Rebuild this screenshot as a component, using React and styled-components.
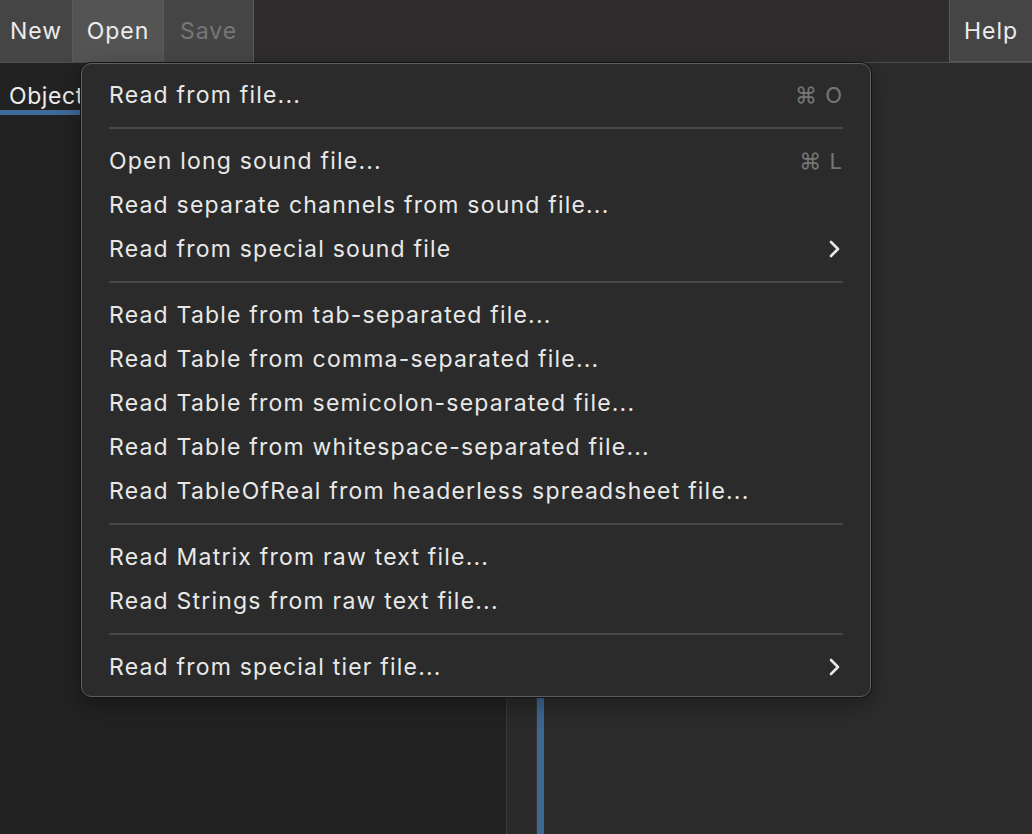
import React from "react";
import styled, { createGlobalStyle } from "styled-components";

const Global = createGlobalStyle`
  html, body { margin: 0; padding: 0; background: #2d2c2c; }
  body {
    font-family: Inter, "Noto Sans", "Liberation Sans", sans-serif;
    -webkit-font-smoothing: antialiased;
  }
`;

const Page = styled.div`
  position: relative;
  width: 1032px;
  height: 834px;
  overflow: hidden;
  display: flex;
  flex-direction: column;
  background: #2d2c2c;
`;

const Toolbar = styled.div`
  display: flex;
  height: 62px;
  border-bottom: 1px solid #4e4e4e;
  background: #2e2c2d;
`;

const ToolButton = styled.div`
  display: flex;
  align-items: center;
  justify-content: center;
  padding: 0 ${(p) => p.pad || 12}px;
  min-width: ${(p) => p.w}px;
  box-sizing: border-box;
  background: ${(p) => (p.active ? "#555454" : "#464545")};
  color: ${(p) => (p.disabled ? "#767676" : "#ececec")};
  font-size: 23px;
  letter-spacing: 1px;
  border-right: 1px solid #5b5b5b;
  ${(p) => p.right && "margin-left: auto; border-left: 1px solid #5b5b5b; border-right: none; border-bottom: 1px solid #5b5b5b;"}
`;

const Body = styled.div`
  flex: 1;
  display: grid;
  grid-template-columns: 506px 1px 29px 1px 7px 1fr;
`;

const LeftPanel = styled.div`
  background: #232222;
`;

const TabRow = styled.div`
  display: flex;
`;

const Tab = styled.div`
  padding: 19px 9px 0 9px;
  height: 52px;
  box-sizing: border-box;
  color: #ececec;
  font-size: 23px;
  letter-spacing: 0.6px;
  border-bottom: 5px solid #3e6b99;
`;

const Rule = styled.div`
  background: ${(p) => p.c};
`;

const Gutter = styled.div`
  background: #2a2a2a;
`;

const Accent = styled.div`
  background: #3d6894;
`;

const RightPanel = styled.div`
  background: #2d2c2c;
`;

const Menu = styled.div`
  position: absolute;
  left: 81px;
  top: 63px;
  width: 790px;
  box-sizing: border-box;
  padding: 9px 0 7px;
  background: #2b2b2b;
  border: 1px solid #5e5e5e;
  border-radius: 10px;
  box-shadow: 0 0 0 1px #141414, 0 8px 24px rgba(0, 0, 0, 0.35);
`;

const Item = styled.div`
  display: flex;
  align-items: center;
  height: 44px;
  padding: 0 27px;
  color: #e8e8e8;
  font-size: 23px;
  letter-spacing: 1.2px;
`;

const Label = styled.span`
  flex: 1;
`;

const Shortcut = styled.span`
  color: #767676;
  font-size: 22px;
  letter-spacing: 1px;
`;

const Separator = styled.div`
  height: 2px;
  margin: 10px 27px;
  background: #484848;
`;

const Chevron = () => (
  <svg width="14" height="20" viewBox="0 0 14 20" style={{ marginRight: 1 }}>
    <path d="M3 3 L10 10 L3 17" fill="none" stroke="#e8e8e8" strokeWidth="2.6" strokeLinecap="round" strokeLinejoin="round" />
  </svg>
);

const groups = [
  [{ label: "Read from file...", key: "⌘ O" }],
  [
    { label: "Open long sound file...", key: "⌘ L" },
    { label: "Read separate channels from sound file..." },
    { label: "Read from special sound file", sub: true },
  ],
  [
    { label: "Read Table from tab-separated file..." },
    { label: "Read Table from comma-separated file..." },
    { label: "Read Table from semicolon-separated file..." },
    { label: "Read Table from whitespace-separated file..." },
    { label: "Read TableOfReal from headerless spreadsheet file..." },
  ],
  [
    { label: "Read Matrix from raw text file..." },
    { label: "Read Strings from raw text file..." },
  ],
  [{ label: "Read from special tier file...", sub: true }],
];

export default function App() {
  return (
    <>
      <Global />
      <Page>
        <Toolbar>
          <ToolButton pad={7} w={73}>New</ToolButton>
          <ToolButton w={91} active>Open</ToolButton>
          <ToolButton w={90} disabled>Save</ToolButton>
          <ToolButton right w={83}>Help</ToolButton>
        </Toolbar>
        <Body>
          <LeftPanel>
            <TabRow>
              <Tab>Objects</Tab>
            </TabRow>
          </LeftPanel>
          <Rule c="#3a3a3a" />
          <Gutter />
          <Rule c="#333" />
          <Accent />
          <RightPanel />
        </Body>
        <Menu>
          {groups.map((g, gi) => (
            <React.Fragment key={gi}>
              {gi > 0 && <Separator />}
              {g.map((it) => (
                <Item key={it.label}>
                  <Label>{it.label}</Label>
                  {it.key && <Shortcut>{it.key}</Shortcut>}
                  {it.sub && <Chevron />}
                </Item>
              ))}
            </React.Fragment>
          ))}
        </Menu>
      </Page>
    </>
  );
}
